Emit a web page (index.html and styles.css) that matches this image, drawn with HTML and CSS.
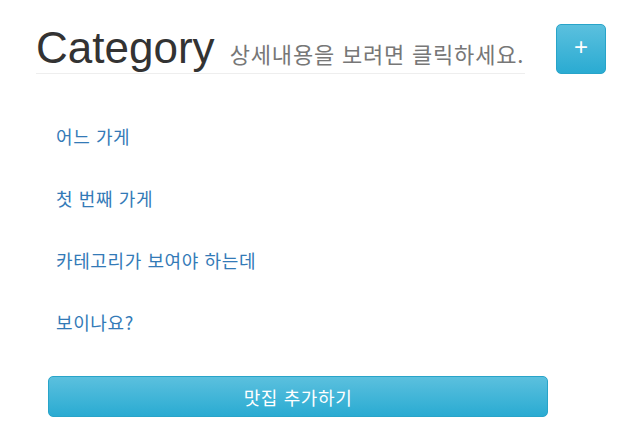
FILE: index.html
```html
<!DOCTYPE html>
<html lang="ko">
<head>
<meta charset="UTF-8" />
<meta name="viewport" content="width=device-width, initial-scale=1" />
<title>Category</title>
<link rel="stylesheet" href="styles.css">
</head>
<body>
  <div class="page">
    <div class="top">
      <h1 class="page-header">Category <small>상세내용을 보려면 클릭하세요.</small></h1>
      <button class="btn btn-plus" type="button">+</button>
    </div>

    <ul class="store-list">
      <li><a href="#">어느 가게</a></li>
      <li><a href="#">첫 번째 가게</a></li>
      <li><a href="#">카테고리가 보여야 하는데</a></li>
      <li><a href="#">보이나요?</a></li>
    </ul>

    <button class="btn btn-add" type="button">맛집 추가하기</button>
  </div>
</body>
</html>
```

FILE: styles.css
```css
/* Base */
* {
  margin: 0;
  padding: 0;
  box-sizing: border-box;
}
body {
  font-family: "Liberation Sans", "Noto Sans CJK KR", sans-serif;
  background: #fff;
  color: #333;
}
.page {
  padding: 24px 16px 0 36px;
}

/* Header */
.top {
  display: flex;
  align-items: flex-start;
}
.page-header {
  width: 489px;
  margin-right: 31px;
  font-size: 44px;
  font-weight: 400;
  line-height: 1.1;
  padding-bottom: 1px;
  border-bottom: 1px solid #eee;
  white-space: nowrap;
}
.page-header small {
  font-family: "Noto Sans CJK KR", sans-serif;
  font-size: 22px;
  letter-spacing: 0.8px;
  color: #777;
  margin-left: 3px;
}

/* Buttons */
.btn {
  font-family: "Noto Sans CJK KR", sans-serif;
  color: #fff;
  border: 1px solid #28a4c9;
  border-radius: 5px;
  background: linear-gradient(to bottom, #5bc0de 0, #2aabd2 100%);
  cursor: pointer;
}
.btn-plus {
  width: 50px;
  height: 50px;
  font-family: "Liberation Sans", sans-serif;
  font-size: 24px;
  line-height: 1;
  padding-bottom: 4px;
}
.btn-add {
  display: block;
  width: 500px;
  height: 41px;
  margin: 23px 0 0 12px;
  font-size: 18px;
  letter-spacing: 0.6px;
  line-height: 1;
}

/* Store list */
.store-list {
  list-style: none;
  margin-top: 31px;
}
.store-list li {
  padding: 19px 20px;
  font-family: "Noto Sans CJK KR", sans-serif;
  font-size: 18px;
  letter-spacing: 0.6px;
  line-height: 24px;
}
.store-list a {
  color: #337ab7;
  text-decoration: none;
}
```
